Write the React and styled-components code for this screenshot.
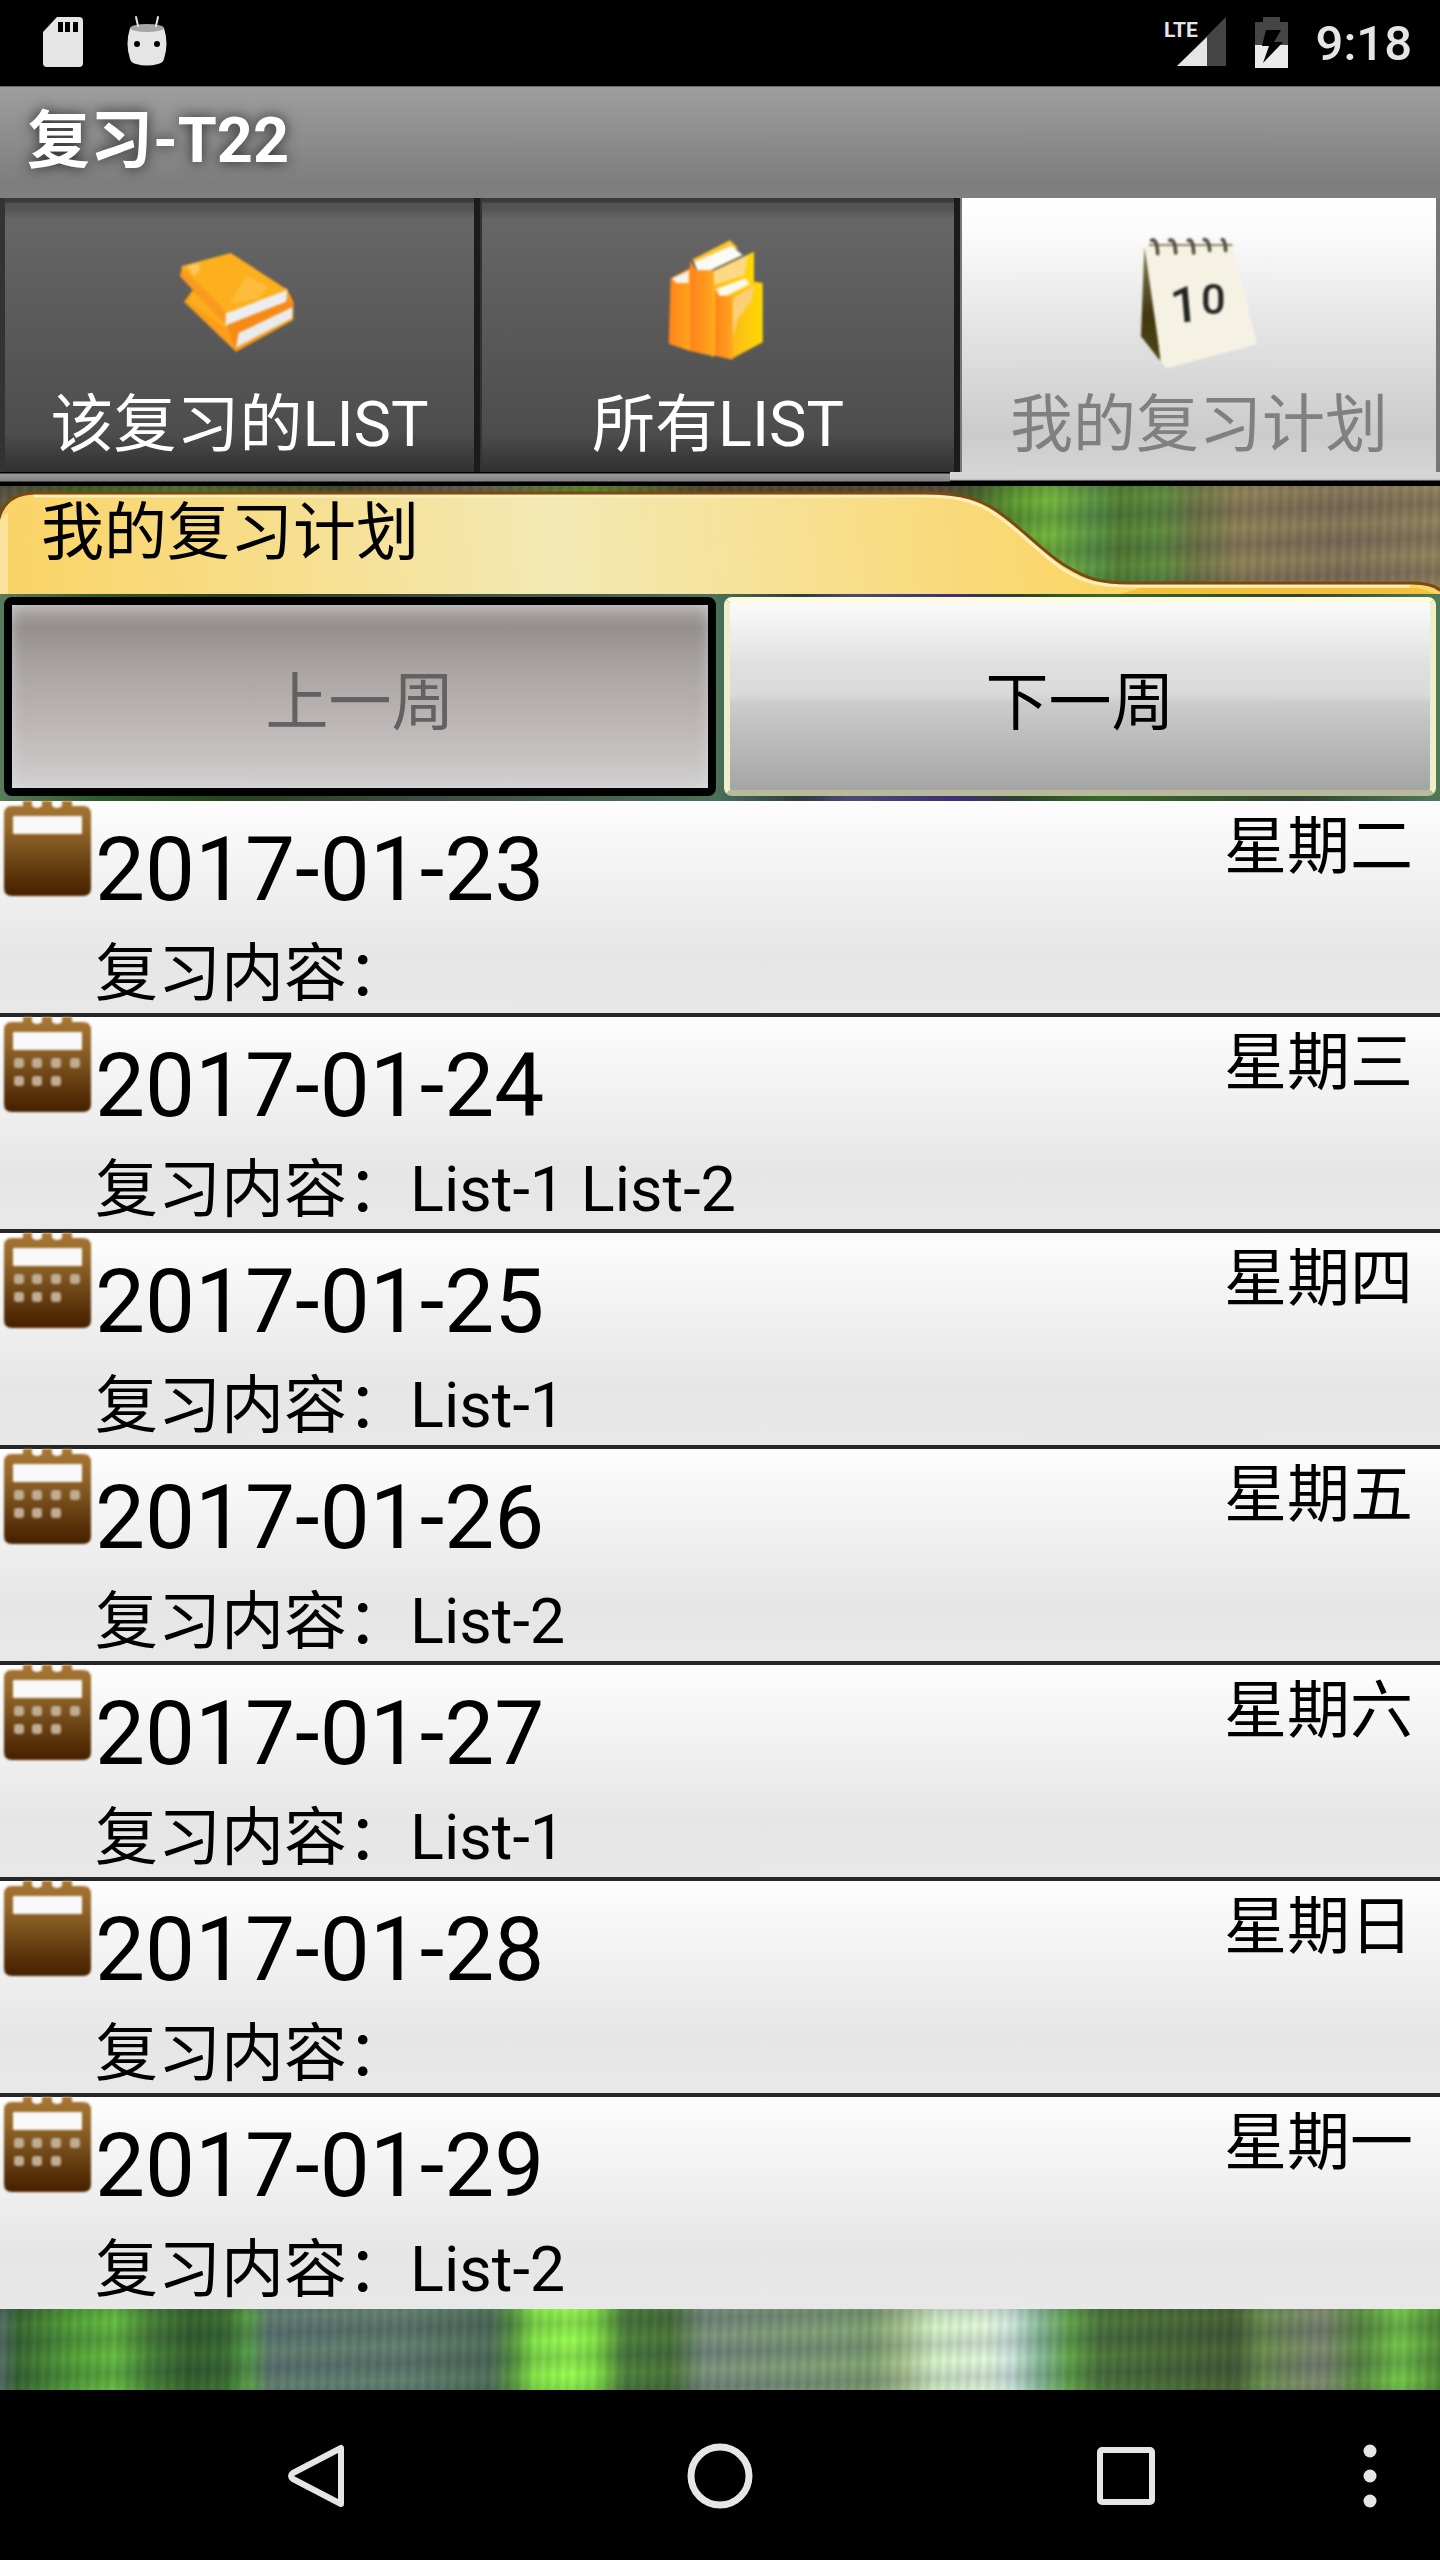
import React, { useState } from "react";
import styled, { createGlobalStyle, css } from "styled-components";

const pct = (list, angle = "90deg") =>
  `linear-gradient(${angle}, ${list
    .map(([x, c]) => `${c} ${((x / 1440) * 100).toFixed(2)}%`)
    .join(", ")})`;

const weave = `
  repeating-linear-gradient(92deg, rgba(20, 30, 30, 0.08) 0px, rgba(255, 255, 255, 0.04) 5px, rgba(20, 30, 30, 0.08) 10px),
  repeating-linear-gradient(178deg, rgba(60, 40, 90, 0.16) 0px, rgba(255, 255, 220, 0.05) 17px, rgba(60, 40, 90, 0.16) 34px)
`;

const meadow = pct([
  [0, "#4a6a5c"], [18, "#2f6426"], [75, "#4aa02e"], [115, "#5cba36"],
  [150, "#3c7c2c"], [190, "#2a5c22"], [225, "#2f6626"], [248, "#4f9a40"],
  [270, "#56766a"], [400, "#587868"], [490, "#476a52"], [512, "#4f9436"],
  [535, "#80ea3e"], [570, "#92ff46"], [595, "#7ee83c"], [625, "#427a30"],
  [670, "#40702e"], [705, "#748e78"], [870, "#7aa06e"], [900, "#a2c088"],
  [935, "#d4f6c8"], [985, "#e2fadc"], [1010, "#d0ece0"], [1040, "#84ba94"],
  [1070, "#58a040"], [1100, "#427030"], [1235, "#3c5a2a"], [1262, "#618a46"],
  [1320, "#78826a"], [1360, "#528a38"], [1400, "#6cc440"], [1440, "#4a8a2c"],
]);

const hillside = pct([
  [0, "#55503a"], [70, "#3d5a18"], [180, "#4a6b20"], [340, "#3a3f1c"],
  [460, "#5a4c44"], [590, "#57801f"], [700, "#4f4420"], [940, "#5a4a2c"],
  [975, "#3f5f20"], [1015, "#559826"], [1050, "#6cb431"], [1095, "#50903a"],
  [1120, "#4b7c28"], [1160, "#568834"], [1195, "#68743c"], [1240, "#887b4e"],
  [1340, "#806f50"], [1440, "#8a7c54"],
]);

const hedge = pct([
  [0, "#5a7a5c"], [100, "#2c5a28"], [240, "#26421f"], [420, "#3c4c40"],
  [715, "#4c7058"], [800, "#2c3c40"], [850, "#4a4a78"], [960, "#3e2e78"],
  [1020, "#2a442c"], [1100, "#37692a"], [1300, "#2e4430"], [1440, "#4f7a58"],
]);

const Global = createGlobalStyle`
  *, *::before, *::after { box-sizing: border-box; }
  body { margin: 0; background: #000; }
  button { font: inherit; border: 0; padding: 0; margin: 0; background: none; color: inherit; }
`;

const Screen = styled.div`
  min-height: 100vh;
  display: flex;
  flex-direction: column;
  background: #000;
  color: #000;
  font-family: Roboto, "Noto Sans CJK SC", sans-serif;
  font-size: 63px;
  line-height: 74px;
`;

const StatusBar = styled.header`
  height: 86px;
  display: flex;
  justify-content: space-between;
  padding: 0 28px 0 42px;
  background: #000;
  color: #e5e5e5;
`;

const StatusGroup = styled.div`
  display: flex;
  align-items: center;
  gap: ${(p) => p.$gap}px;
`;

const Clock = styled.time`
  padding-top: 2px;
  font-size: 49px;
  line-height: 60px;
  font-weight: 500;
`;

const TitleBar = styled.h1`
  margin: 0;
  height: 112px;
  padding: 17px 27px 0;
  font-size: 63px;
  line-height: 74px;
  font-weight: 700;
  color: #fff;
  text-shadow: 0 0 14px rgba(0, 0, 0, 0.75);
  background: linear-gradient(#9e9e9e, #7d7d7d 88%, #808080);
  border-top: 1px solid #6c6c6c;
`;

const Tabs = styled.div`
  display: grid;
  grid-template-columns: repeat(3, 1fr);
  height: 274px;
  background: #000;
`;

const Tab = styled.button`
  display: flex;
  flex-direction: column;
  align-items: center;
  padding-top: 27px;
  gap: 13px;
  color: #fff;
  border-style: solid;
  border-color: #303030 #1b1b1b #303030 #333;
  border-width: 0 6px 0 5px;
  background: linear-gradient(#3a3a3a 0, #3a3a3a 4px, #515151 5px, #565656 12px, #666 22px, #4d4d4d 235px, #303030);

  & + & {
    border-left-width: 2px;
  }

  ${(p) =>
    p.$selected &&
    css`
      color: #808080;
      border-color: #777;
      border-width: 0 4px 0 2px;
      background: linear-gradient(#fff 0, #fcfcfc 30px, #cbcbcb 235px, #d5d5d5);
    `}
`;

const TabStrip = styled.div`
  display: flex;
  height: 14px;
`;

const StripPart = styled.span`
  flex: ${(p) => p.$grow} 1 0;
  background: ${(p) =>
    p.$lit
      ? "linear-gradient(#d6d6d6 6px, #bdbdbd 8px, #000 9px)"
      : "linear-gradient(#000 1px, #999 2px, #858585 9px, #000 10px)"};
`;

const SectionHead = styled.div`
  display: grid;
  height: 108px;
  background: ${weave}, ${hillside};
  & > * {
    grid-area: 1 / 1;
  }
`;

const FolderShape = styled.svg`
  display: block;
  width: 100%;
  height: 108px;
`;

const SectionTitle = styled.h2`
  margin: 0;
  padding: 10px 41px 0;
  font-size: 63px;
  line-height: 74px;
  font-weight: 400;
  z-index: 1;
`;

const Pager = styled.div`
  display: grid;
  grid-template-columns: 1fr 1fr;
  gap: 8px;
  height: 207px;
  padding: 3px 4px 5px;
  background: ${hedge};
`;

const PagerButton = styled.button`
  padding-top: 12px;
  border-radius: 8px;
  border: 6px solid #fbfbd8;
  border-color: #fcfcdc #eeeecb #b9b99c #eeeecb;
  color: #000;
  background: linear-gradient(#fbfbfb, #e2e2e2 30%, #d9d9d9 49%, #cbcbcb 54%, #a5a5a5);

  &:disabled {
    color: #636161;
    border: 8px solid #000;
    background: linear-gradient(#b0aaaa, #948e8d 12%, #aaa4a4 35%, #c0b9b9 70%, #d0cfcf);
    box-shadow: inset 0 0 14px rgba(235, 235, 240, 0.5);
  }
`;

const PlanList = styled.ul`
  list-style: none;
  margin: 0;
  padding: 0;
  display: grid;
  gap: 4px;
  background: #262626;
`;

const PlanRow = styled.li`
  display: grid;
  grid-template-columns: 95px 1fr auto;
  height: 212px;
  padding-right: 27px;
  background: linear-gradient(#fdfdfd, #e6e6e6 72%, #e8e8e8);
`;

const PlanBody = styled.div`
  padding-top: 17px;
`;

const PlanDate = styled.time`
  display: block;
  font-size: 89px;
  line-height: 104px;
`;

const PlanText = styled.p`
  margin: 0;
  line-height: 74px;
  padding-top: 15px;
`;

const Weekday = styled.span`
  padding-top: 9px;
`;

const Meadow = styled.div`
  flex: 1;
  min-height: 81px;
  background: ${weave}, ${meadow};
`;

const NavRow = styled.nav`
  display: flex;
  align-items: center;
  height: 170px;
  padding: 2px 34px 0 19.5%;
  background: #000;
`;

const NavButton = styled.button`
  display: flex;
  justify-content: center;
  width: 72px;
`;

const NavGap = styled.span`
  flex: ${(p) => p.$grow} 1 0;
`;

const Soft = styled.svg`
  filter: blur(1px);
`;

const SdCard = () => (
  <svg width="42" height="52" viewBox="0 0 42 52" aria-hidden="true">
    <path fill="#e5e5e5" d="M15 0h22a4 4 0 0 1 4 4v42a4 4 0 0 1-4 4H5a4 4 0 0 1-4-4V15z" />
    <path d="M16 5h5v10h-5zM23 5h5v10h-5zM31 5h5v10h-5z" />
  </svg>
);

const Robot = () => (
  <svg width="42" height="56" viewBox="0 -3 42 56" aria-hidden="true">
    <path fill="#e5e5e5" d="M4 10Q-1 26 4 41Q5 45 10 46Q21 49 32 46Q37 45 38 41Q43 26 38 10z" />
    <ellipse cx="21" cy="10" rx="17" ry="4" fill="#a6a6a6" />
    <path d="M10 -1l2 9M32 -1l-2 9" stroke="#e5e5e5" strokeWidth="2" strokeLinecap="round" />
    <ellipse cx="11" cy="26" rx="3" ry="3" />
    <ellipse cx="31" cy="26" rx="3" ry="3" />
  </svg>
);

const Signal = () => (
  <svg width="64" height="52" viewBox="0 0 64 52" role="img" aria-label="LTE">
    <path fill="#454545" d="M63 0v49H14z" />
    <path fill="#e5e5e5" d="M44 20v29H14z" />
    <text x="1" y="20" fill="#e5e5e5" fontFamily="Roboto, sans-serif" fontSize="21" fontWeight="700">LTE</text>
  </svg>
);

const Battery = () => (
  <svg width="33" height="52" viewBox="0 0 33 52" aria-hidden="true">
    <path fill="#454545" d="M8 0h17v5h8v24H0V5h8z" />
    <path fill="#ebebeb" d="M0 28h33v23H0z" />
    <path d="M11 13h15l-7 12h9L8 46l6-17H7z" />
  </svg>
);

const StackedBooks = () => (
  <Soft width="160" height="150" viewBox="0 -30 480 450" aria-hidden="true">
    <path fill="#fb9d1a" d="M98 165L72 200L228 350L400 255V200L380 160z" />
    <path fill="#fdae1c" d="M98 170L84 200L205 285L196 240z" />
    <path fill="#e9ebee" d="M228 296L398 214L396 250L226 338z" />
    <path fill="#f78a16" d="M200 270L384 196L402 204L398 216L236 294L226 345z" />
    <path fill="#f99a1e" d="M66 94L60 124L196 270L212 225z" />
    <path fill="#ecedf1" d="M198 232L382 164L378 200L196 272z" />
    <path fill="#fdb01d" d="M64 94L212 54L382 164L202 234z" />
    <path fill="#fcc248" d="M260 122L322 155L298 190L210 205z" opacity=".7" />
    <path fill="#ffd98a" d="M82 92L116 84L120 104L102 122z" opacity=".6" />
  </Soft>
);

const StandingBooks = () => (
  <Soft width="130" height="150" viewBox="15 0 390 450" aria-hidden="true">
    <defs>
      <linearGradient id="spine">
        <stop offset="0" stopColor="#ff831b" />
        <stop offset="1" stopColor="#ffa51d" />
      </linearGradient>
      <linearGradient id="cover">
        <stop offset="0" stopColor="#fdb71c" />
        <stop offset="1" stopColor="#ffda00" />
      </linearGradient>
    </defs>
    <path fill="url(#spine)" d="M68 160L126 130V378L62 356z" />
    <path fill="#f8f2ea" d="M72 160L122 138V174H84z" />
    <path fill="url(#cover)" d="M190 140L318 80V350L190 396z" />
    <path fill="#fbd985" d="M196 140L300 90L290 150L200 180z" />
    <path fill="url(#spine)" d="M126 108L146 136H196V394L126 378z" />
    <path fill="#fdc62e" d="M132 104L246 46L270 70L150 118z" />
    <path fill="#fcfaf5" d="M138 112L250 62L284 90L188 136H148z" />
    <path fill="url(#cover)" d="M246 214L306 168L344 174V352L250 402z" />
    <path fill="#fbcf74" d="M250 222L320 180L310 230L270 280L252 345z" />
    <path fill="url(#spine)" d="M202 194L220 212H254V404L200 392z" />
    <path fill="#fcf8ec" d="M204 192L292 160L306 178L236 212H214z" />
  </Soft>
);

const DeskCalendar = () => (
  <Soft width="150" height="150" viewBox="-15 0 450 450" aria-hidden="true">
    <defs>
      <linearGradient id="easel" x1="0" y1="0" x2="0" y2="1">
        <stop offset="0" stopColor="#8a8058" />
        <stop offset=".6" stopColor="#40370e" />
        <stop offset="1" stopColor="#4f4616" />
      </linearGradient>
    </defs>
    <path fill="url(#easel)" d="M46 66L36 334L94 408L76 200z" />
    <path fill="#f5f2e4" d="M46 62L310 58L384 358L112 430L96 408z" />
    <path stroke="#8a8468" strokeWidth="6" d="M60 60H310" />
    <g stroke="#55503a" strokeWidth="11" fill="none" strokeLinecap="round">
      <path d="M68 46Q84 40 86 86M122 46Q138 40 140 84M178 46Q192 40 194 84M226 44Q240 44 242 76M280 44Q288 44 290 76" />
    </g>
    <g fill="#242424" fontFamily="Roboto, sans-serif" fontWeight="500">
      <text x="128" y="292" fontSize="150" transform="rotate(-5 160 292)">1</text>
      <text x="216" y="268" fontSize="130">0</text>
    </g>
  </Soft>
);

const DayIcon = ({ filled }) => (
  <Soft width="95" height="100" viewBox="0 0 95 100" aria-hidden="true">
    <defs>
      <linearGradient id="leather" x1="0" y1="0" x2="0" y2="1">
        <stop offset="0" stopColor="#aa7833" />
        <stop offset=".3" stopColor="#94682a" />
        <stop offset=".7" stopColor="#653e12" />
        <stop offset=".95" stopColor="#4a2302" />
      </linearGradient>
    </defs>
    <path
      fill="url(#leather)"
      d="M23 -3h9v8q5 4 10 0v-8h10v8q5 4 10 0v-8h10v8h11q8 0 8 8v74q0 8-8 8H12q-8 0-8-8V13q0-8 8-8h11z"
    />
    <rect x="13" y="15" width="69" height="18" rx="1" fill="#f8f8f8" />
    {filled && (
      <g fill="#c0ab93">
        {[19, 37, 56, 75].map((x) => (
          <rect key={x} x={x - 5} y="41" width="10" height="10" rx="3" />
        ))}
        {[19, 37, 56].map((x) => (
          <rect key={x} x={x - 5} y="59" width="10" height="10" rx="3" />
        ))}
      </g>
    )}
  </Soft>
);

const Folder = () => (
  <FolderShape viewBox="0 0 1440 108" preserveAspectRatio="none" aria-hidden="true">
    <defs>
      <linearGradient id="paper" gradientUnits="userSpaceOnUse" x1="30" y1="150" x2="1090" y2="70">
        <stop offset="0" stopColor="#fad468" />
        <stop offset=".5" stopColor="#f3e9b4" />
        <stop offset="1" stopColor="#fbd567" />
      </linearGradient>
    </defs>
    <path
      fill="url(#paper)"
      d="M0 108V34Q6 9 34 8H925C962 8 982 14 1004 31C1028 49 1047 70 1066 81C1087 94 1100 98 1130 98H1412Q1432 98 1440 106V108z"
    />
    <path fill="#fff" opacity=".35" d="M0 34L8 26V108H0z" />
    <path fill="#efb728" opacity=".7" d="M1140 102H1418L1436 108H1120z" />
    <path
      fill="none"
      stroke="#fdeebb"
      strokeWidth="3"
      d="M34 10H925C960 10 980 16 1002 33C1026 51 1045 72 1064 84C1085 97 1100 100 1130 100H1410"
    />
    <path
      fill="none"
      stroke="#7a4a12"
      strokeWidth="3"
      d="M0 28Q8 8 34 7H925C962 7 982 13 1004 30C1028 48 1047 69 1066 80C1087 93 1100 97 1130 97H1412Q1432 97 1440 104"
    />
  </FolderShape>
);

const TABS = [
  { label: "该复习的LIST", Icon: StackedBooks },
  { label: "所有LIST", Icon: StandingBooks },
  { label: "我的复习计划", Icon: DeskCalendar },
];

const DAYS = [
  ["2017-01-23", "星期二", ""],
  ["2017-01-24", "星期三", "List-1 List-2"],
  ["2017-01-25", "星期四", "List-1"],
  ["2017-01-26", "星期五", "List-2"],
  ["2017-01-27", "星期六", "List-1"],
  ["2017-01-28", "星期日", ""],
  ["2017-01-29", "星期一", "List-2"],
];

export default function App() {
  const [tab, setTab] = useState(2);

  return (
    <Screen>
      <Global />
      <StatusBar>
        <StatusGroup $gap={42}>
          <SdCard />
          <Robot />
        </StatusGroup>
        <StatusGroup $gap={28}>
          <Signal />
          <Battery />
          <Clock>9:18</Clock>
        </StatusGroup>
      </StatusBar>
      <TitleBar>复习-T22</TitleBar>
      <Tabs role="tablist">
        {TABS.map(({ label, Icon }, i) => (
          <Tab key={label} role="tab" aria-selected={tab === i} $selected={tab === i} onClick={() => setTab(i)}>
            <Icon />
            {label}
          </Tab>
        ))}
      </Tabs>
      <TabStrip>
        <StripPart $grow={66} />
        <StripPart $grow={34} $lit />
      </TabStrip>
      <SectionHead>
        <Folder />
        <SectionTitle>我的复习计划</SectionTitle>
      </SectionHead>
      <Pager>
        <PagerButton disabled>上一周</PagerButton>
        <PagerButton>下一周</PagerButton>
      </Pager>
      <PlanList>
        {DAYS.map(([date, weekday, lists]) => (
          <PlanRow key={date}>
            <DayIcon filled={lists !== ""} />
            <PlanBody>
              <PlanDate>{date}</PlanDate>
              <PlanText>复习内容：{lists}</PlanText>
            </PlanBody>
            <Weekday>{weekday}</Weekday>
          </PlanRow>
        ))}
      </PlanList>
      <Meadow />
      <NavRow>
        <NavButton aria-label="Back">
          <svg width="66" height="66" viewBox="0 0 66 66">
            <path d="M57 5v56L9 36Q5 33 9 30z" fill="none" stroke="#e5e5e5" strokeWidth="6" strokeLinejoin="round" />
          </svg>
        </NavButton>
        <NavGap $grow={331} />
        <NavButton aria-label="Home">
          <svg width="66" height="66" viewBox="0 0 66 66">
            <circle cx="33" cy="33" r="29" fill="none" stroke="#e5e5e5" strokeWidth="7" />
          </svg>
        </NavButton>
        <NavGap $grow={334} />
        <NavButton aria-label="Recent apps">
          <svg width="66" height="66" viewBox="0 0 66 66">
            <rect x="7" y="7" width="52" height="52" rx="2" fill="none" stroke="#e5e5e5" strokeWidth="6" />
          </svg>
        </NavButton>
        <NavGap $grow={172} />
        <NavButton aria-label="Menu">
          <svg width="66" height="66" viewBox="0 0 66 66" fill="#e5e5e5">
            <circle cx="33" cy="8" r="6.5" />
            <circle cx="33" cy="33" r="6.5" />
            <circle cx="33" cy="58" r="6.5" />
          </svg>
        </NavButton>
      </NavRow>
    </Screen>
  );
}
